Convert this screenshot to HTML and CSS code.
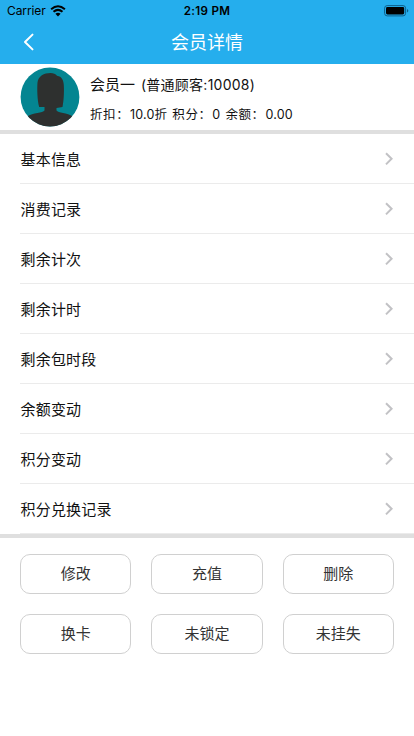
FILE: index.html
```html
<!DOCTYPE html>
<html lang="zh-CN">
<head>
<meta charset="utf-8">
<title>会员详情</title>
<link rel="stylesheet" href="styles.css">
</head>
<body>
<header class="top">
  <div class="status">
    <div class="carrier"><span>Carrier</span>
      <svg width="16" height="12" viewBox="0 0 16 12"><path d="M1.1 4.2Q8-1.7 14.9 4.2M3.5 6.8Q8 3 12.5 6.8" fill="none" stroke="#000" stroke-width="2"/><path d="M5.4 8.8Q8 6.8 10.6 8.8L8 11.4Z"/></svg>
    </div>
    <div class="time">2:19 PM</div>
    <svg class="battery" width="25" height="12" viewBox="0 0 25 12"><rect x=".6" y=".6" width="21" height="10.3" rx="2.6" fill="none" stroke="#0d5f8a"/><rect x="2" y="2" width="18.2" height="7.5" rx="1.4"/><path d="M23 4v3.6q1.3-.5 1.3-1.8T23 4" fill="#0d5f8a"/></svg>
  </div>
  <nav class="nav">
    <svg width="12" height="18" viewBox="0 0 12 18"><path d="M9.5 1.6 2 9l7.5 7.4" fill="none" stroke="#fff" stroke-width="2" stroke-linecap="round" stroke-linejoin="round"/></svg>
    <h1>会员详情</h1>
  </nav>
</header>
<section class="profile">
  <svg class="avatar" width="60" height="60" viewBox="0 0 60 60"><defs><clipPath id="disc"><circle cx="30" cy="30" r="29.4"/></clipPath></defs><g clip-path="url(#disc)"><rect width="60" height="60" fill="#048591"/><path d="M19.2 40C17.3 33 17 22 17.5 15.5 18.3 9 24 6 30.5 6 33.5 6 35.5 7 37 8.8 42 9.5 43.5 13.5 43.8 18 44.3 26 43.6 35 42.5 40L36.5 41V43.5C38 46 47 45.5 53 49.5L57 60H3L7 49.5C13 45.5 23 46 24.5 43.5V40Z" fill="#2e302f"/></g></svg>
  <div class="info">
    <div class="name"><b>会员一</b><span>(普通顾客:10008)</span></div>
    <div class="stats"><span>折扣：</span><span>10.0折</span><span>积分：</span><span>0</span><span>余额：</span><span>0.00</span></div>
  </div>
</section>
<main class="list">
  <div class="row"><span>基本信息</span><svg class="chevron" viewBox="0 0 8 14"><path d="m1 1.2 5.6 5.6L1 12.4"/></svg></div>
  <div class="row"><span>消费记录</span><svg class="chevron" viewBox="0 0 8 14"><path d="m1 1.2 5.6 5.6L1 12.4"/></svg></div>
  <div class="row"><span>剩余计次</span><svg class="chevron" viewBox="0 0 8 14"><path d="m1 1.2 5.6 5.6L1 12.4"/></svg></div>
  <div class="row"><span>剩余计时</span><svg class="chevron" viewBox="0 0 8 14"><path d="m1 1.2 5.6 5.6L1 12.4"/></svg></div>
  <div class="row"><span>剩余包时段</span><svg class="chevron" viewBox="0 0 8 14"><path d="m1 1.2 5.6 5.6L1 12.4"/></svg></div>
  <div class="row"><span>余额变动</span><svg class="chevron" viewBox="0 0 8 14"><path d="m1 1.2 5.6 5.6L1 12.4"/></svg></div>
  <div class="row"><span>积分变动</span><svg class="chevron" viewBox="0 0 8 14"><path d="m1 1.2 5.6 5.6L1 12.4"/></svg></div>
  <div class="row"><span>积分兑换记录</span><svg class="chevron" viewBox="0 0 8 14"><path d="m1 1.2 5.6 5.6L1 12.4"/></svg></div>
</main>
<section class="actions">
  <button>修改</button><button>充值</button><button>删除</button>
  <button>换卡</button><button>未锁定</button><button>未挂失</button>
</section>
</body>
</html>
```
FILE: styles.css
```css
* { box-sizing: border-box; }
body {
  margin: 0;
  height: 736px;
  overflow: hidden;
  background: #fff;
  color: #111;
  font-family: Inter, "Noto Sans CJK SC", sans-serif;
}
svg { display: block; flex: none; }
.top { height: 64px; background: #25aeed; }
.status {
  display: grid;
  grid-template-columns: 1fr auto 1fr;
  align-items: center;
  height: 20px;
  padding: 1px 5px 0 7px;
  color: #000;
  font-size: 12px;
  line-height: 20px;
}
.carrier { display: flex; align-items: center; gap: 5px; }
.carrier span { letter-spacing: -.1px; }
.carrier svg { margin-left: -1px; }
.time { font-weight: 600; font-size: 11.6px; letter-spacing: .3px; margin-left: -2px; }
.battery { justify-self: end; }
.nav {
  display: grid;
  grid-template-columns: 12px 1fr 12px;
  align-items: center;
  height: 44px;
  padding: 0 23px;
}
.nav h1 {
  margin: 0;
  padding-top: 2px;
  color: #fff;
  font-size: 18px;
  line-height: 26px;
  font-weight: 400;
  text-align: center;
}
.profile {
  display: flex;
  height: 70px;
  padding: 3px 0 0 20px;
  border-bottom: 4px solid #dfdfdf;
}
.info { padding: 7px 0 0 10px; white-space: nowrap; }
.name { display: flex; gap: 6px; font-size: 14px; line-height: 22px; letter-spacing: .25px; }
.name b { font-weight: 400; font-size: 15px; letter-spacing: 0; }
.stats { display: flex; margin-top: 9px; font-size: 12.5px; line-height: 20px; letter-spacing: .2px; }
.stats span:nth-child(odd) { width: 40px; letter-spacing: .6px; }
.stats span:nth-child(even) { margin-right: 5px; }
.list { border-bottom: 4px solid #dfdfdf; }
.row {
  display: flex;
  align-items: center;
  justify-content: space-between;
  height: 50px;
  margin-left: 20px;
  padding: 0 21px 0 .5px;
  border-bottom: 1px solid #ebebeb;
  font-size: 15px;
  letter-spacing: .2px;
}
.chevron { width: 8px; height: 14px; fill: none; stroke: #c2c2c5; stroke-width: 2; }
.actions {
  display: grid;
  grid-template-columns: repeat(3, 1fr);
  gap: 20px;
  padding: 16px 20px 0;
}
.actions button {
  height: 40px;
  padding: 0;
  border: 1px solid #d0d0d0;
  border-radius: 10px;
  background: #fff;
  color: #333;
  font: 15px/22px Inter, "Noto Sans CJK SC", sans-serif;
}
```
